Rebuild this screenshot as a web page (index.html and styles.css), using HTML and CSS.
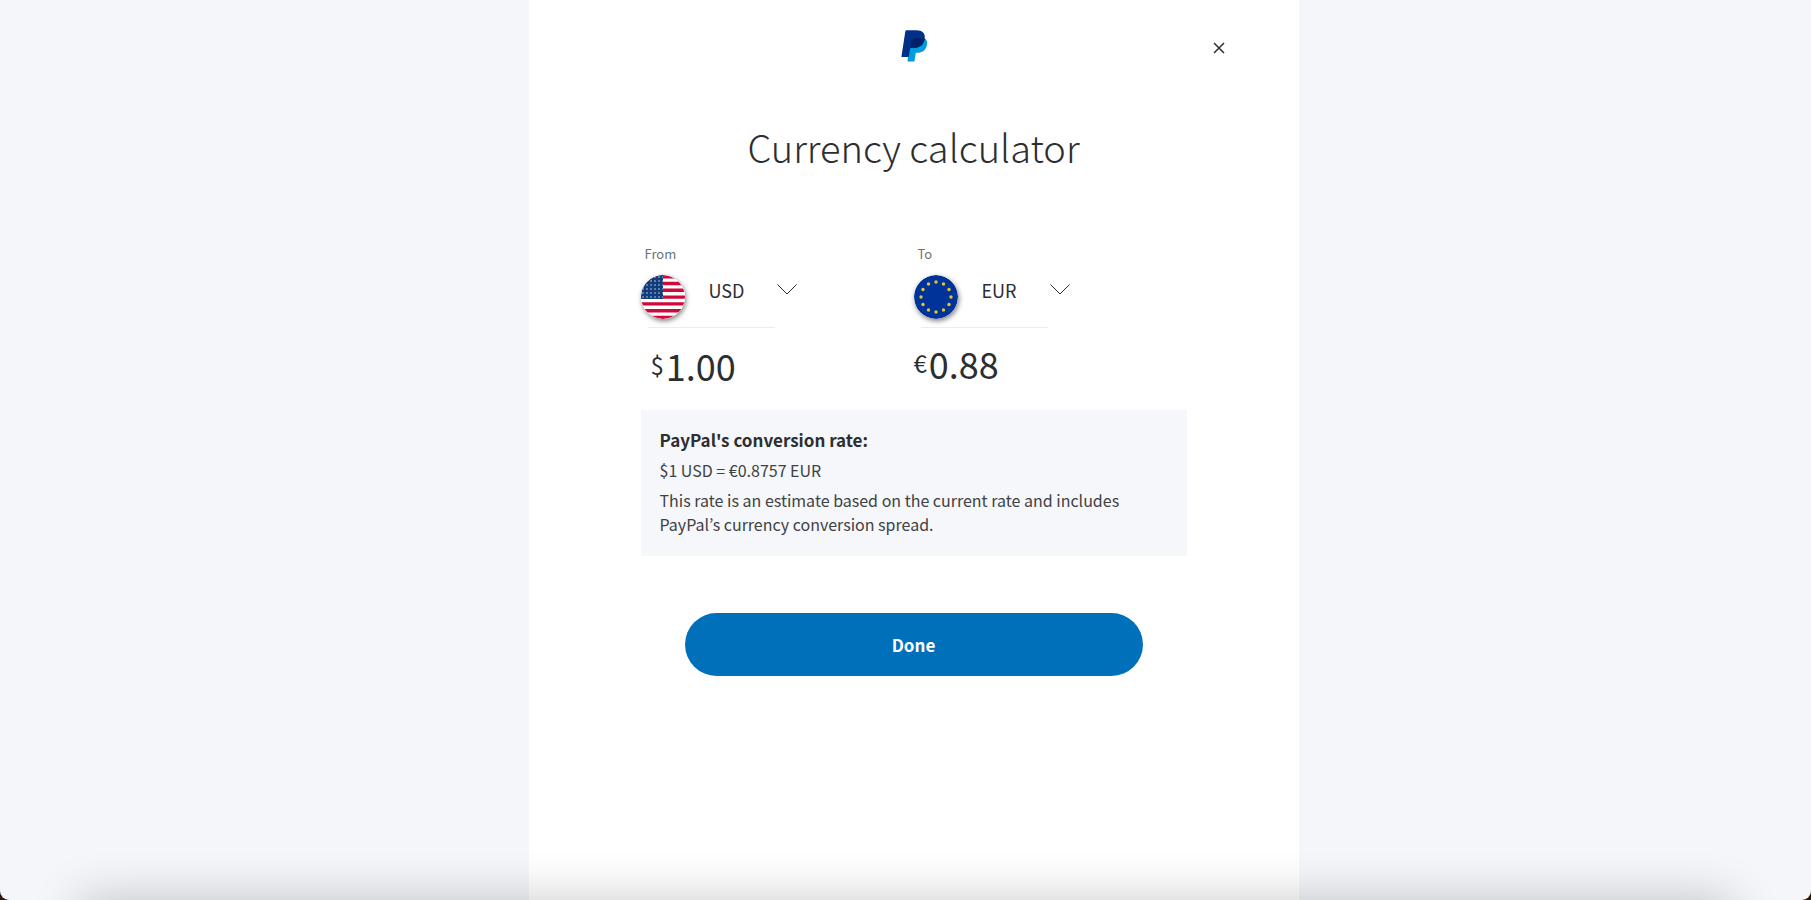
FILE: index.html
```html
<!DOCTYPE html>
<html lang="en">
<head>
<meta charset="utf-8">
<title>Currency calculator</title>
<link rel="stylesheet" href="styles.css">
</head>
<body>
<div class="window">
  <main class="panel">
    <header class="panel-header">
      <svg class="logo" viewBox="0 0 26 32" role="img" aria-label="PayPal">
        <path fill="#009cde" d="M24 8.500C26 10 26.500 12.500 25.800 15.500C24.700 20.500 21.200 22.800 16.300 22.800H14.800L13.400 31.500H6.400L8.500 17Z"/>
        <path fill="#003087" d="M4.300 1.400Q4.500 0.300 5.600 0.300H15.500C21.300 0.300 24.600 3.300 23.700 8.800C22.700 15.200 18.700 17.800 12.800 17.800H10.600Q9.300 17.800 9 19.200L7.700 27H0.400Z"/>
        <path fill="#012169" d="M11.500 8.300H21.500Q23 8.300 23.700 8.800C22.700 15.200 18.700 17.800 12.800 17.800H9.300L10.300 9.600Q10.500 8.300 11.500 8.300Z"/>
      </svg>
      <button class="close" type="button" aria-label="Close">
        <svg viewBox="0 0 12 12"><path d="M1 1L11 11M11 1L1 11"/></svg>
      </button>
    </header>
    <h1 class="title">Currency calculator</h1>
    <form class="calculator">
      <div class="currencies">
        <div class="currency">
          <label class="currency-label" for="from">From</label>
          <div class="picker">
            <svg class="flag" viewBox="0 0 44 44" aria-hidden="true">
              <defs>
                <clipPath id="disc"><circle cx="22" cy="22" r="22"/></clipPath>
                <pattern id="stars" width="4" height="4" patternUnits="userSpaceOnUse"><circle cx="2" cy="2" r="0.800" fill="#c3cfe0"/></pattern>
              </defs>
              <g clip-path="url(#disc)">
                <path fill="#fff" d="M0 0H44V44H0Z"/>
                <path stroke="#cf0a3a" stroke-width="3.400" d="M0 1.700H44M0 8.500H44M0 15.300H44M0 22.100H44M0 28.900H44M0 35.700H44M0 42.500H44"/>
                <path fill="#123d7c" d="M0 0H22V24H0Z"/>
                <path fill="url(#stars)" d="M0 0H22V24H0Z"/>
              </g>
            </svg>
            <span class="select-wrap">
              <select class="select" id="from"><option>USD</option><option>EUR</option></select>
              <svg class="chevron" viewBox="0 0 20 11" aria-hidden="true"><path d="M.5 .5L10 10L19.500 .5"/></svg>
            </span>
          </div>
          <div class="amount amount-from">
            <span class="symbol">$</span><input class="value" type="text" value="1.00" aria-label="Amount in USD">
          </div>
        </div>
        <div class="currency">
          <label class="currency-label" for="to">To</label>
          <div class="picker">
            <svg class="flag" viewBox="0 0 44 44" aria-hidden="true">
              <circle cx="22" cy="22" r="22" fill="#039"/>
              <g fill="#e3c62a">
                <circle cx="22" cy="7" r="1.700"/><circle cx="29.500" cy="9" r="1.700"/><circle cx="35" cy="14.500" r="1.700"/><circle cx="37" cy="22" r="1.700"/><circle cx="35" cy="29.500" r="1.700"/><circle cx="29.500" cy="35" r="1.700"/><circle cx="22" cy="37" r="1.700"/><circle cx="14.500" cy="35" r="1.700"/><circle cx="9" cy="29.500" r="1.700"/><circle cx="7" cy="22" r="1.700"/><circle cx="9" cy="14.500" r="1.700"/><circle cx="14.500" cy="9" r="1.700"/>
              </g>
            </svg>
            <span class="select-wrap">
              <select class="select" id="to"><option>EUR</option><option>USD</option></select>
              <svg class="chevron" viewBox="0 0 20 11" aria-hidden="true"><path d="M.5 .5L10 10L19.500 .5"/></svg>
            </span>
          </div>
          <div class="amount">
            <span class="symbol">€</span><input class="value" type="text" value="0.88" aria-label="Amount in EUR">
          </div>
        </div>
      </div>
      <section class="rate">
        <h2 class="rate-title">PayPal's conversion rate:</h2>
        <p class="rate-value">$1 USD = €0.8757 EUR</p>
        <p class="rate-note">This rate is an estimate based on the current rate and includes PayPal’s currency conversion spread.</p>
      </section>
      <button class="done" type="button">Done</button>
    </form>
  </main>
  <div class="shade"></div>
</div>
</body>
</html>
```
FILE: styles.css
```css
* { box-sizing: border-box; }

html { background: #2b1a12; }

body {
  margin: 0;
  color: #2c2e2f;
  font-family: "Noto Sans CJK KR", "Open Sans", sans-serif;
}

.window {
  position: relative;
  display: flex;
  justify-content: center;
  min-height: 100vh;
  padding-left: 16px;
  overflow: hidden;
  background: #f4f6fa;
  border-radius: 0 0 9px 9px;
}

.panel {
  width: 100%;
  max-width: 770px;
  background: #fff;
}

.panel-header {
  display: grid;
  grid-template-columns: 1fr auto 1fr;
  align-items: center;
  padding: 30px 72px 0;
}

.logo {
  grid-column: 2;
  width: 26px;
  height: 32px;
}

.close {
  justify-self: end;
  display: flex;
  margin-top: 4px;
  padding: 2px;
  border: 0;
  background: none;
}

.close svg {
  width: 12px;
  height: 12px;
  fill: none;
  stroke: #2c2e2f;
  stroke-width: 1.5;
}

.title {
  margin: 59px 0 0;
  font-size: 38px;
  line-height: 52px;
  font-weight: 300;
  text-align: center;
}

.calculator {
  display: flex;
  flex-direction: column;
  width: 100%;
  max-width: 546px;
  margin: 71px auto 0;
}

.currencies {
  display: grid;
  grid-template-columns: 1fr 1fr;
}

.currency-label {
  display: block;
  padding-left: 4px;
  color: #6c7378;
  font-size: 13px;
  line-height: 20px;
}

.picker {
  display: flex;
  align-items: center;
  height: 64px;
}

.flag {
  width: 44px;
  height: 44px;
  margin-top: 2px;
  border-radius: 50%;
  box-shadow: 1px 2px 5px rgba(0, 0, 0, 0.5);
}

.select-wrap {
  position: relative;
  width: 112px;
  height: 64px;
}

.select-wrap::before {
  content: "";
  position: absolute;
  left: -37px;
  bottom: 0;
  width: 127px;
  height: 1px;
  background: #eaecee;
}

.select {
  appearance: none;
  width: 100%;
  height: 52px;
  padding: 0 0 0 24px;
  border: 0;
  background: none;
  color: inherit;
  font-family: inherit;
  font-size: 18px;
}

.chevron {
  position: absolute;
  top: 20px;
  right: 0;
  width: 20px;
  height: 11px;
  fill: none;
  stroke: #2c2e2f;
  pointer-events: none;
}

.amount {
  display: flex;
  align-items: center;
  gap: 2px;
  height: 70px;
}

.amount-from { padding: 4px 0 0 10px; }

.symbol {
  font-size: 24px;
  line-height: 48px;
}

.value {
  width: 160px;
  height: 48px;
  padding: 0;
  border: 0;
  background: none;
  color: inherit;
  font-family: inherit;
  font-size: 36px;
}

.rate {
  margin-top: 12px;
  padding: 18px 19px 20px;
  background: #f5f7fb;
}

.rate-title,
.rate-value,
.rate-note {
  margin: 0;
  font-size: 16px;
  line-height: 24px;
}

.rate-title { font-size: 17px; }

.rate-value { margin: 6px 0; }

.rate-value,
.rate-note { color: #3f4244; }

.done {
  align-self: center;
  width: 458px;
  max-width: 100%;
  height: 63px;
  margin-top: 57px;
  border: 0;
  border-radius: 32px;
  background: #0070ba;
  color: #fff;
  font-family: inherit;
  font-size: 17px;
  font-weight: 700;
}

.shade {
  position: absolute;
  top: 100%;
  left: 80px;
  right: 80px;
  height: 60px;
  box-shadow: 0 0 48px 2px rgba(0, 0, 0, 0.2);
  pointer-events: none;
}
```
